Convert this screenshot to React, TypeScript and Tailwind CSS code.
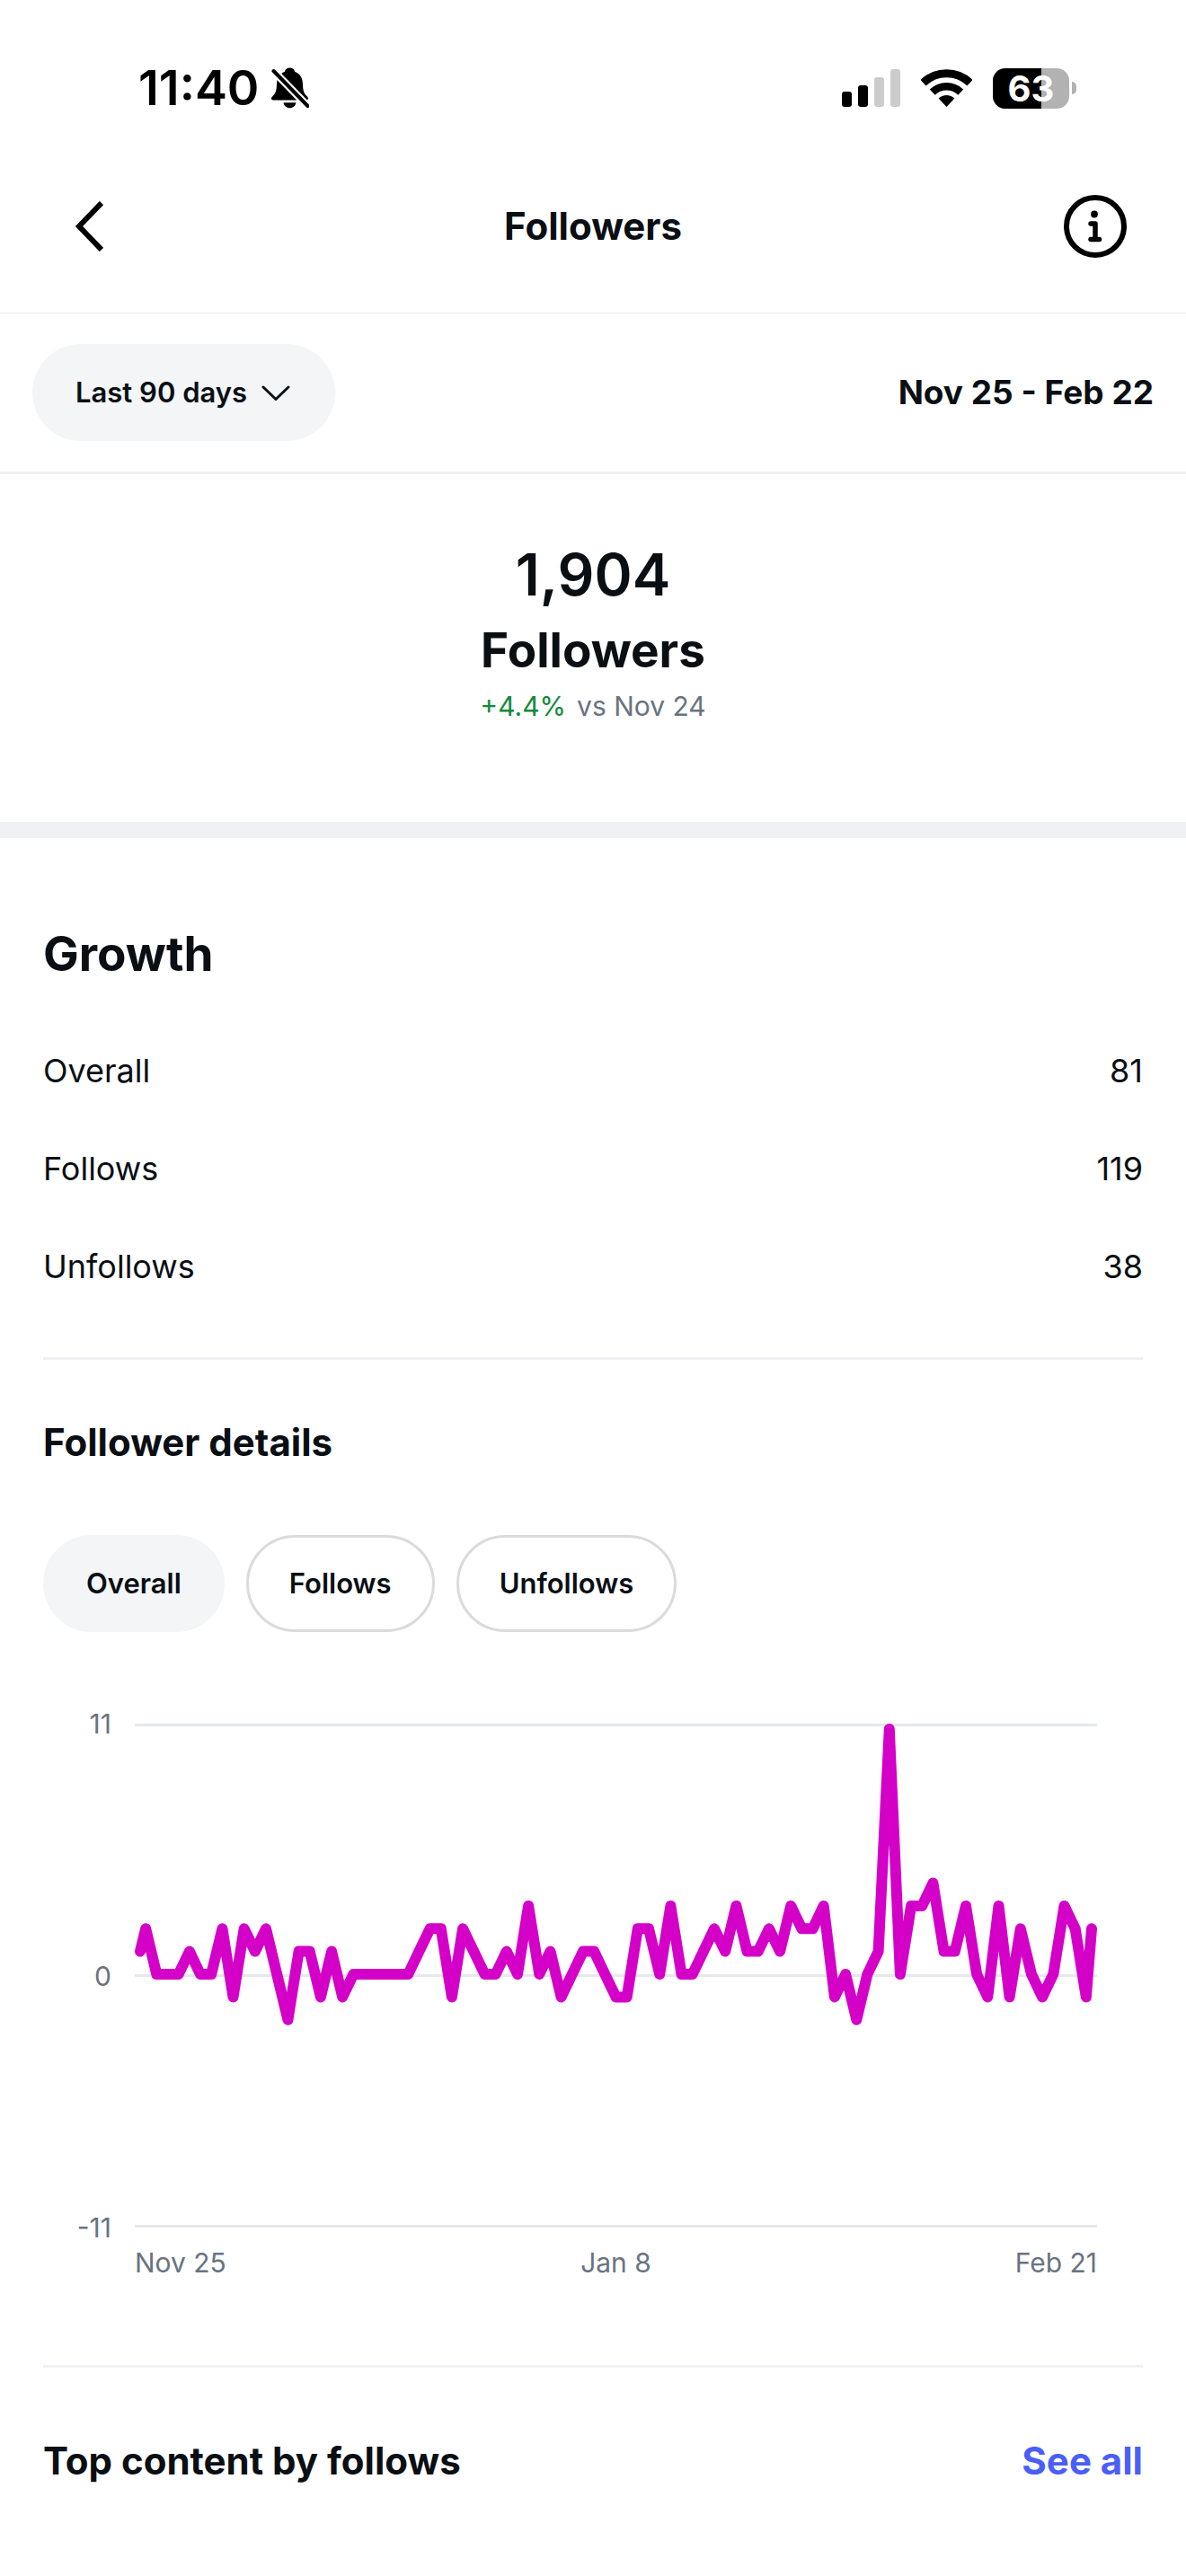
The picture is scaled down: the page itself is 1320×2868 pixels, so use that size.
import { useState } from "react";

const growth = [
  { label: "Overall", value: 81 },
  { label: "Follows", value: 119 },
  { label: "Unfollows", value: 38 },
];

const tabs = ["Overall", "Follows", "Unfollows"];

// net followers per day, Nov 25 - Feb 21
const daily = [
  1, 2, 0, 0, 0, 1, 0, 0, 2, -1, 2, 1, 2, 0, -2, 1, 1, -1, 1, -1, 0, 0, 0, 0, 0, 0, 1, 2, 2, -1,
  2, 1, 0, 0, 1, 0, 3, 0, 1, -1, 0, 1, 1, 0, -1, -1, 2, 2, 0, 3, 0, 0, 1, 2, 1, 3, 1, 1, 2, 1,
  3, 2, 2, 3, -1, 0, -2, 0, 1, 11, 0, 3, 3, 4, 1, 1, 3, 0, -1, 3, -1, 2, 0, -1, 0, 3, 2, -1, 2,
];

const W = 1071;
const H = 558;
const MAX = 11;

// keep the round line caps inside the plot
const clamp = (n: number, max: number) => Math.min(Math.max(n, 6), max - 6);

const points = daily
  .map((v, i) => {
    const x = clamp((i * W) / (daily.length - 1), W);
    const y = clamp(H / 2 - (v * H) / 2 / MAX, H);
    return `${x.toFixed(1)},${y.toFixed(1)}`;
  })
  .join(" ");

function StatusBar() {
  return (
    <div className="flex h-[156px] items-center justify-between pt-10 pr-[122px] pl-[154px] text-black">
      <div className="flex items-center gap-[14px]">
        <span className="text-[54px] leading-[64px] font-semibold">11:40</span>
        <svg width="42" height="46" viewBox="0 0 42 46" fill="none">
          <path d="M20.5 0.5c3 0 5.200 1.700 5.600 4.200 5.800 2.200 8.700 7.200 8.900 13.800.2 7.500 1.200 10 4 13 1.400 1.500 2 2.300 2 3 0 1.200-.9 1.900-2.300 1.900H2.300C.9 36.400 0 35.700 0 34.500c0-.7.6-1.500 2-3 2.800-3 3.800-5.500 4-13 .2-6.600 3.100-11.600 8.900-13.800.4-2.500 2.600-4.200 5.600-4.200z" fill="currentColor" />
          <path d="M13.500 39.300h14c-.6 3.700-3.400 6-7 6s-6.400-2.300-7-6z" fill="currentColor" />
          <path d="M-1 .5 39 41.500" stroke="#fff" strokeWidth="8.500" />
          <path d="M2.500 4 40.500 43" stroke="currentColor" strokeWidth="4" strokeLinecap="round" />
        </svg>
      </div>

      <div className="flex items-center gap-[23px]">
        <svg width="65" height="42" viewBox="0 0 65 42">
          <rect x="0" y="25" width="11" height="17" rx="3" fill="#000" />
          <rect x="18" y="18" width="11" height="24" rx="3" fill="#000" />
          <rect x="36" y="9" width="11" height="33" rx="3" fill="#ccc" />
          <rect x="54" y="0" width="11" height="42" rx="3" fill="#ccc" />
        </svg>
        <svg width="57" height="42" viewBox="0 0 57 42" fill="none" stroke="#000">
          <path d="M2.500 15.200a37.500 37.500 0 0 1 52 0" strokeWidth="9" />
          <path d="M12.700 25.600a22.800 22.800 0 0 1 31.600 0" strokeWidth="8.500" />
          <path d="M19.600 32.500a13 13 0 0 1 17.800 0L28.500 42z" fill="#000" stroke="none" />
        </svg>
        <div className="flex items-center gap-[3px]">
          <div className="relative flex h-[45px] w-[85px] items-center justify-center rounded-[14px] bg-[#b2b2b2]">
            <div className="absolute inset-y-0 left-0 w-[63%] rounded-l-[14px] bg-black" />
            <span className="relative text-[40px] leading-[45px] font-bold text-white">63</span>
          </div>
          <div className="h-[14px] w-[5px] rounded-r-full bg-[#b2b2b2]" />
        </div>
      </div>
    </div>
  );
}

function Header() {
  return (
    <header className="grid h-[193px] grid-cols-[1fr_auto_1fr] items-center border-b border-[#e5e7eb] px-[66px]">
      <button aria-label="Back" className="justify-self-start pl-[17px] text-black">
        <svg width="32" height="56" viewBox="0 0 32 56" fill="none" stroke="currentColor" strokeWidth="6">
          <path d="M30 2 5 28l25 26" />
        </svg>
      </button>
      <h1 className="text-[42px] leading-[56px] font-bold">Followers</h1>
      <button aria-label="About followers" className="justify-self-end text-black">
        <svg width="70" height="70" viewBox="0 0 70 70" fill="none" stroke="currentColor">
          <circle cx="35" cy="35" r="32" strokeWidth="6" />
          <circle cx="34" cy="21.500" r="3.900" fill="currentColor" stroke="none" />
          <path d="M30 32h5v17.500M30 49.500h9.500" strokeWidth="5.500" strokeLinecap="round" strokeLinejoin="round" />
        </svg>
      </button>
    </header>
  );
}

function Chart() {
  return (
    <div className="mt-[82px] pr-[51px] text-[30px] text-[#697380]">
      <div className="flex gap-[26px]">
        <div className="flex w-[76px] flex-col justify-between text-right leading-[40px]">
          <span>11</span>
          <span>0</span>
          <span>-11</span>
        </div>
        <svg className="my-5 h-[561px] min-w-0 flex-1" viewBox="0 0 1071 561" preserveAspectRatio="none" fill="none">
          <path d="M0 1.500h1071M0 280.500h1071M0 559.500h1071" stroke="#e5e8ec" strokeWidth="3" />
          <polyline points={points} stroke="#d400c8" strokeWidth="12" strokeLinecap="round" strokeLinejoin="round" />
        </svg>
      </div>
      <div className="grid grid-cols-3 pl-[102px] leading-[38px]">
        <span>Nov 25</span>
        <span className="text-center">Jan 8</span>
        <span className="text-right">Feb 21</span>
      </div>
    </div>
  );
}

export default function App() {
  const [tab, setTab] = useState("Overall");

  return (
    <div className="min-h-screen bg-white font-['Inter',sans-serif] text-[#0a0f14]">
      <StatusBar />
      <Header />

      <div className="flex items-center justify-between border-b-3 border-[#f0f1f5] px-9 py-[34px]">
        <div className="relative">
          <select
            aria-label="Date range"
            className="h-[108px] w-[337px] appearance-none rounded-full bg-[#f3f5f7] pl-12 text-[31px] font-semibold"
          >
            <option>Last 90 days</option>
          </select>
          <svg className="pointer-events-none absolute top-[46px] right-[50px]" width="32" height="18" viewBox="0 0 32 18" fill="none" stroke="currentColor" strokeWidth="3" strokeLinecap="round" strokeLinejoin="round">
            <path d="m2 2 14 13.500L30 2" />
          </svg>
        </div>
        <span className="text-[37px] leading-[48px] font-bold">Nov 25 - Feb 22</span>
      </div>

      <section className="flex flex-col items-center pt-[72px] pb-[109px]">
        <p className="text-[64px] leading-[80px] font-semibold">1,904</p>
        <h2 className="mt-3 text-[53px] leading-[64px] font-bold">Followers</h2>
        <p className="mt-[10px] flex gap-3 text-[30px] leading-[40px] text-[#697380]">
          <span className="text-[#118a3c]">+4.4%</span>
          <span>vs Nov 24</span>
        </p>
      </section>

      <div className="h-[18px] bg-[#f0f1f5]" />

      <main className="px-12">
        <section className="border-b-3 border-[#f0f1f5] pt-[97px] pb-[47px]">
          <h2 className="text-[53px] leading-[64px] font-bold">Growth</h2>
          <table className="mt-[43px] w-full text-[36px] leading-[48px]">
            <tbody>
              {growth.map((row) => (
                <tr key={row.label} className="h-[109px]">
                  <th scope="row" className="text-left font-normal">{row.label}</th>
                  <td className="text-right">{row.value}</td>
                </tr>
              ))}
            </tbody>
          </table>
        </section>

        <section className="border-b-3 border-[#f0f1f5] pt-16 pb-[95px]">
          <h3 className="text-[42px] leading-[56px] font-bold">Follower details</h3>
          <div className="mt-[75px] flex gap-6">
            {tabs.map((name) => (
              <button
                key={name}
                onClick={() => setTab(name)}
                aria-pressed={tab === name}
                className={`h-[108px] rounded-full border-3 px-[45px] text-[31px] font-semibold ${
                  tab === name ? "border-[#f3f5f7] bg-[#f3f5f7]" : "border-[#dbdbdb] bg-white"
                }`}
              >
                {name}
              </button>
            ))}
          </div>
          <Chart />
        </section>

        <section className="flex items-center justify-between pt-[76px] pb-[100px] text-[42px] leading-[56px] font-bold">
          <h3>Top content by follows</h3>
          <a href="#" className="text-[#4a5ef8]">See all</a>
        </section>
      </main>
    </div>
  );
}
